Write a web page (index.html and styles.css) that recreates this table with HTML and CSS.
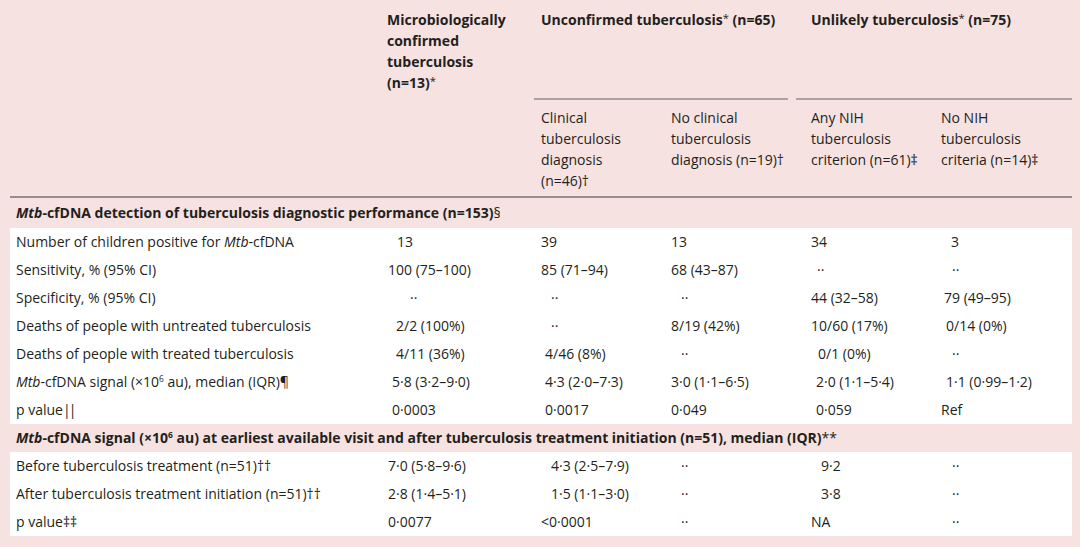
FILE: index.html
```html
<!DOCTYPE html>
<html lang="en">
<head>
<meta charset="utf-8">
<title>Mtb-cfDNA table</title>
<link rel="stylesheet" href="styles.css">
</head>
<body>
<div class="tbl">
  <div class="thead">
    <div class="h-blank"></div>
    <div class="h-main">Microbiologically<br>confirmed<br>tuberculosis<br>(n=13)<sup class="fn">*</sup></div>
    <div class="h-span h-span-a">Unconfirmed tuberculosis<sup class="fn">*</sup> (n=65)</div>
    <div class="h-span h-span-b">Unlikely tuberculosis<sup class="fn">*</sup> (n=75)</div>
    <div class="h-sub">Clinical<br>tuberculosis<br>diagnosis<br>(n=46)†</div>
    <div class="h-sub">No clinical<br>tuberculosis<br>diagnosis (n=19)†</div>
    <div class="h-sub">Any NIH<br>tuberculosis<br>criterion (n=61)‡</div>
    <div class="h-sub">No NIH<br>tuberculosis<br>criteria (n=14)‡</div>
  </div>

  <div class="sec sec-first"><i>Mtb</i>-cfDNA detection of tuberculosis diagnostic performance (n=153)<span class="mark">§</span></div>
  <div class="block">
    <div class="row">
      <div class="lbl">Number of children positive for <i>Mtb</i>-cfDNA</div>
      <div class="o10">13</div><div>39</div><div>13</div><div>34</div><div class="o10">3</div>
    </div>
    <div class="row">
      <div class="lbl">Sensitivity, % (95% CI)</div>
      <div class="o1">100 (75–100)</div><div>85 (71–94)</div><div>68 (43–87)</div><div class="o6">··</div><div class="o11">··</div>
    </div>
    <div class="row">
      <div class="lbl">Specificity, % (95% CI)</div>
      <div class="o23">··</div><div class="o10">··</div><div class="o10">··</div><div>44 (32–58)</div><div class="o3">79 (49–95)</div>
    </div>
    <div class="row">
      <div class="lbl">Deaths of people with untreated tuberculosis</div>
      <div class="o9">2/2 (100%)</div><div class="o10">··</div><div>8/19 (42%)</div><div>10/60 (17%)</div><div class="o5">0/14 (0%)</div>
    </div>
    <div class="row">
      <div class="lbl">Deaths of people with treated tuberculosis</div>
      <div class="o9">4/11 (36%)</div><div class="o4">4/46 (8%)</div><div class="o10">··</div><div class="o7">0/1 (0%)</div><div class="o11">··</div>
    </div>
    <div class="row">
      <div class="lbl"><i>Mtb</i>-cfDNA signal (×10<sup class="exp">6</sup> au), median (IQR)¶</div>
      <div class="o5">5·8 (3·2–9·0)</div><div class="o4">4·3 (2·0–7·3)</div><div>3·0 (1·1–6·5)</div><div class="o5">2·0 (1·1–5·4)</div><div class="o5">1·1 (0·99–1·2)</div>
    </div>
    <div class="row">
      <div class="lbl">p value<span class="bars">||</span></div>
      <div class="o5">0·0003</div><div class="o4">0·0017</div><div>0·049</div><div class="o5">0·059</div><div>Ref</div>
    </div>
  </div>

  <div class="sec"><i>Mtb</i>-cfDNA signal (×10<sup class="exp">6</sup> au) at earliest available visit and after tuberculosis treatment initiation (n=51), median (IQR)<span class="mark">**</span></div>
  <div class="block">
    <div class="row">
      <div class="lbl">Before tuberculosis treatment (n=51)††</div>
      <div class="o1">7·0 (5·8–9·6)</div><div class="o10">4·3 (2·5–7·9)</div><div class="o10">··</div><div class="o10">9·2</div><div class="o11">··</div>
    </div>
    <div class="row">
      <div class="lbl">After tuberculosis treatment initiation (n=51)††</div>
      <div class="o1">2·8 (1·4–5·1)</div><div class="o10">1·5 (1·1–3·0)</div><div class="o10">··</div><div class="o10">3·8</div><div class="o11">··</div>
    </div>
    <div class="row">
      <div class="lbl">p value‡‡</div>
      <div class="o1">0·0077</div><div>&lt;0·0001</div><div class="o10">··</div><div>NA</div><div class="o11">··</div>
    </div>
  </div>
</div>
</body>
</html>
```

FILE: styles.css
```css
html, body {
  margin: 0;
  padding: 0;
  background: #f6e2e0;
}

body {
  font-family: "Open Sans", "Noto Sans", sans-serif;
  font-size: 14px;
  color: #231f20;
  width: 1080px;
  height: 547px;
  overflow: hidden;
}

.tbl {
  --cols: 377px 154px 130px 140px 130px 1fr;
  margin-left: 10px;
  width: 1062px;
}

.thead {
  display: grid;
  grid-template-columns: var(--cols);
  grid-template-rows: 100px 96px;
  border-bottom: 2px solid #968e8d;
  line-height: 21px;
}

.h-blank {
  grid-row: 1 / 3;
  grid-column: 1;
}

.h-main {
  grid-row: 1 / 3;
  grid-column: 2;
  font-weight: 700;
  padding-top: 9px;
}

.h-span {
  font-weight: 700;
  padding-top: 9px;
  border-bottom: 2px solid #aaa2a1;
  box-sizing: border-box;
}

.h-span-a {
  grid-column: 3 / 5;
  margin-left: -7px;
  padding-left: 7px;
  margin-right: 23px;
}

.h-span-b {
  grid-column: 5 / 7;
  margin-left: -15px;
  padding-left: 15px;
}

.h-sub {
  padding-top: 7px;
}

.fn {
  font-weight: 400;
  font-size: 0.8em;
  vertical-align: 0.3em;
  line-height: 0;
}

.exp {
  font-size: 0.6em;
  vertical-align: 0.6em;
  line-height: 0;
}

.bars {
  letter-spacing: -2px;
}

.sec {
  height: 28px;
  line-height: 28px;
  padding-left: 6px;
  font-weight: 700;
}

.sec-first {
  height: 30px;
  line-height: 30px;
}

.sec .mark {
  font-weight: 400;
}

.block {
  background: #ffffff;
}

.row {
  display: grid;
  grid-template-columns: var(--cols);
  height: 28px;
  line-height: 28px;
  white-space: nowrap;
}

.lbl {
  padding-left: 6px;
}

.o1 { padding-left: 1px; }
.o3 { padding-left: 3px; }
.o4 { padding-left: 4px; }
.o5 { padding-left: 5px; }
.o6 { padding-left: 6px; }
.o7 { padding-left: 7px; }
.o9 { padding-left: 9px; }
.o10 { padding-left: 10px; }
.o11 { padding-left: 11px; }
.o23 { padding-left: 23px; }
```
